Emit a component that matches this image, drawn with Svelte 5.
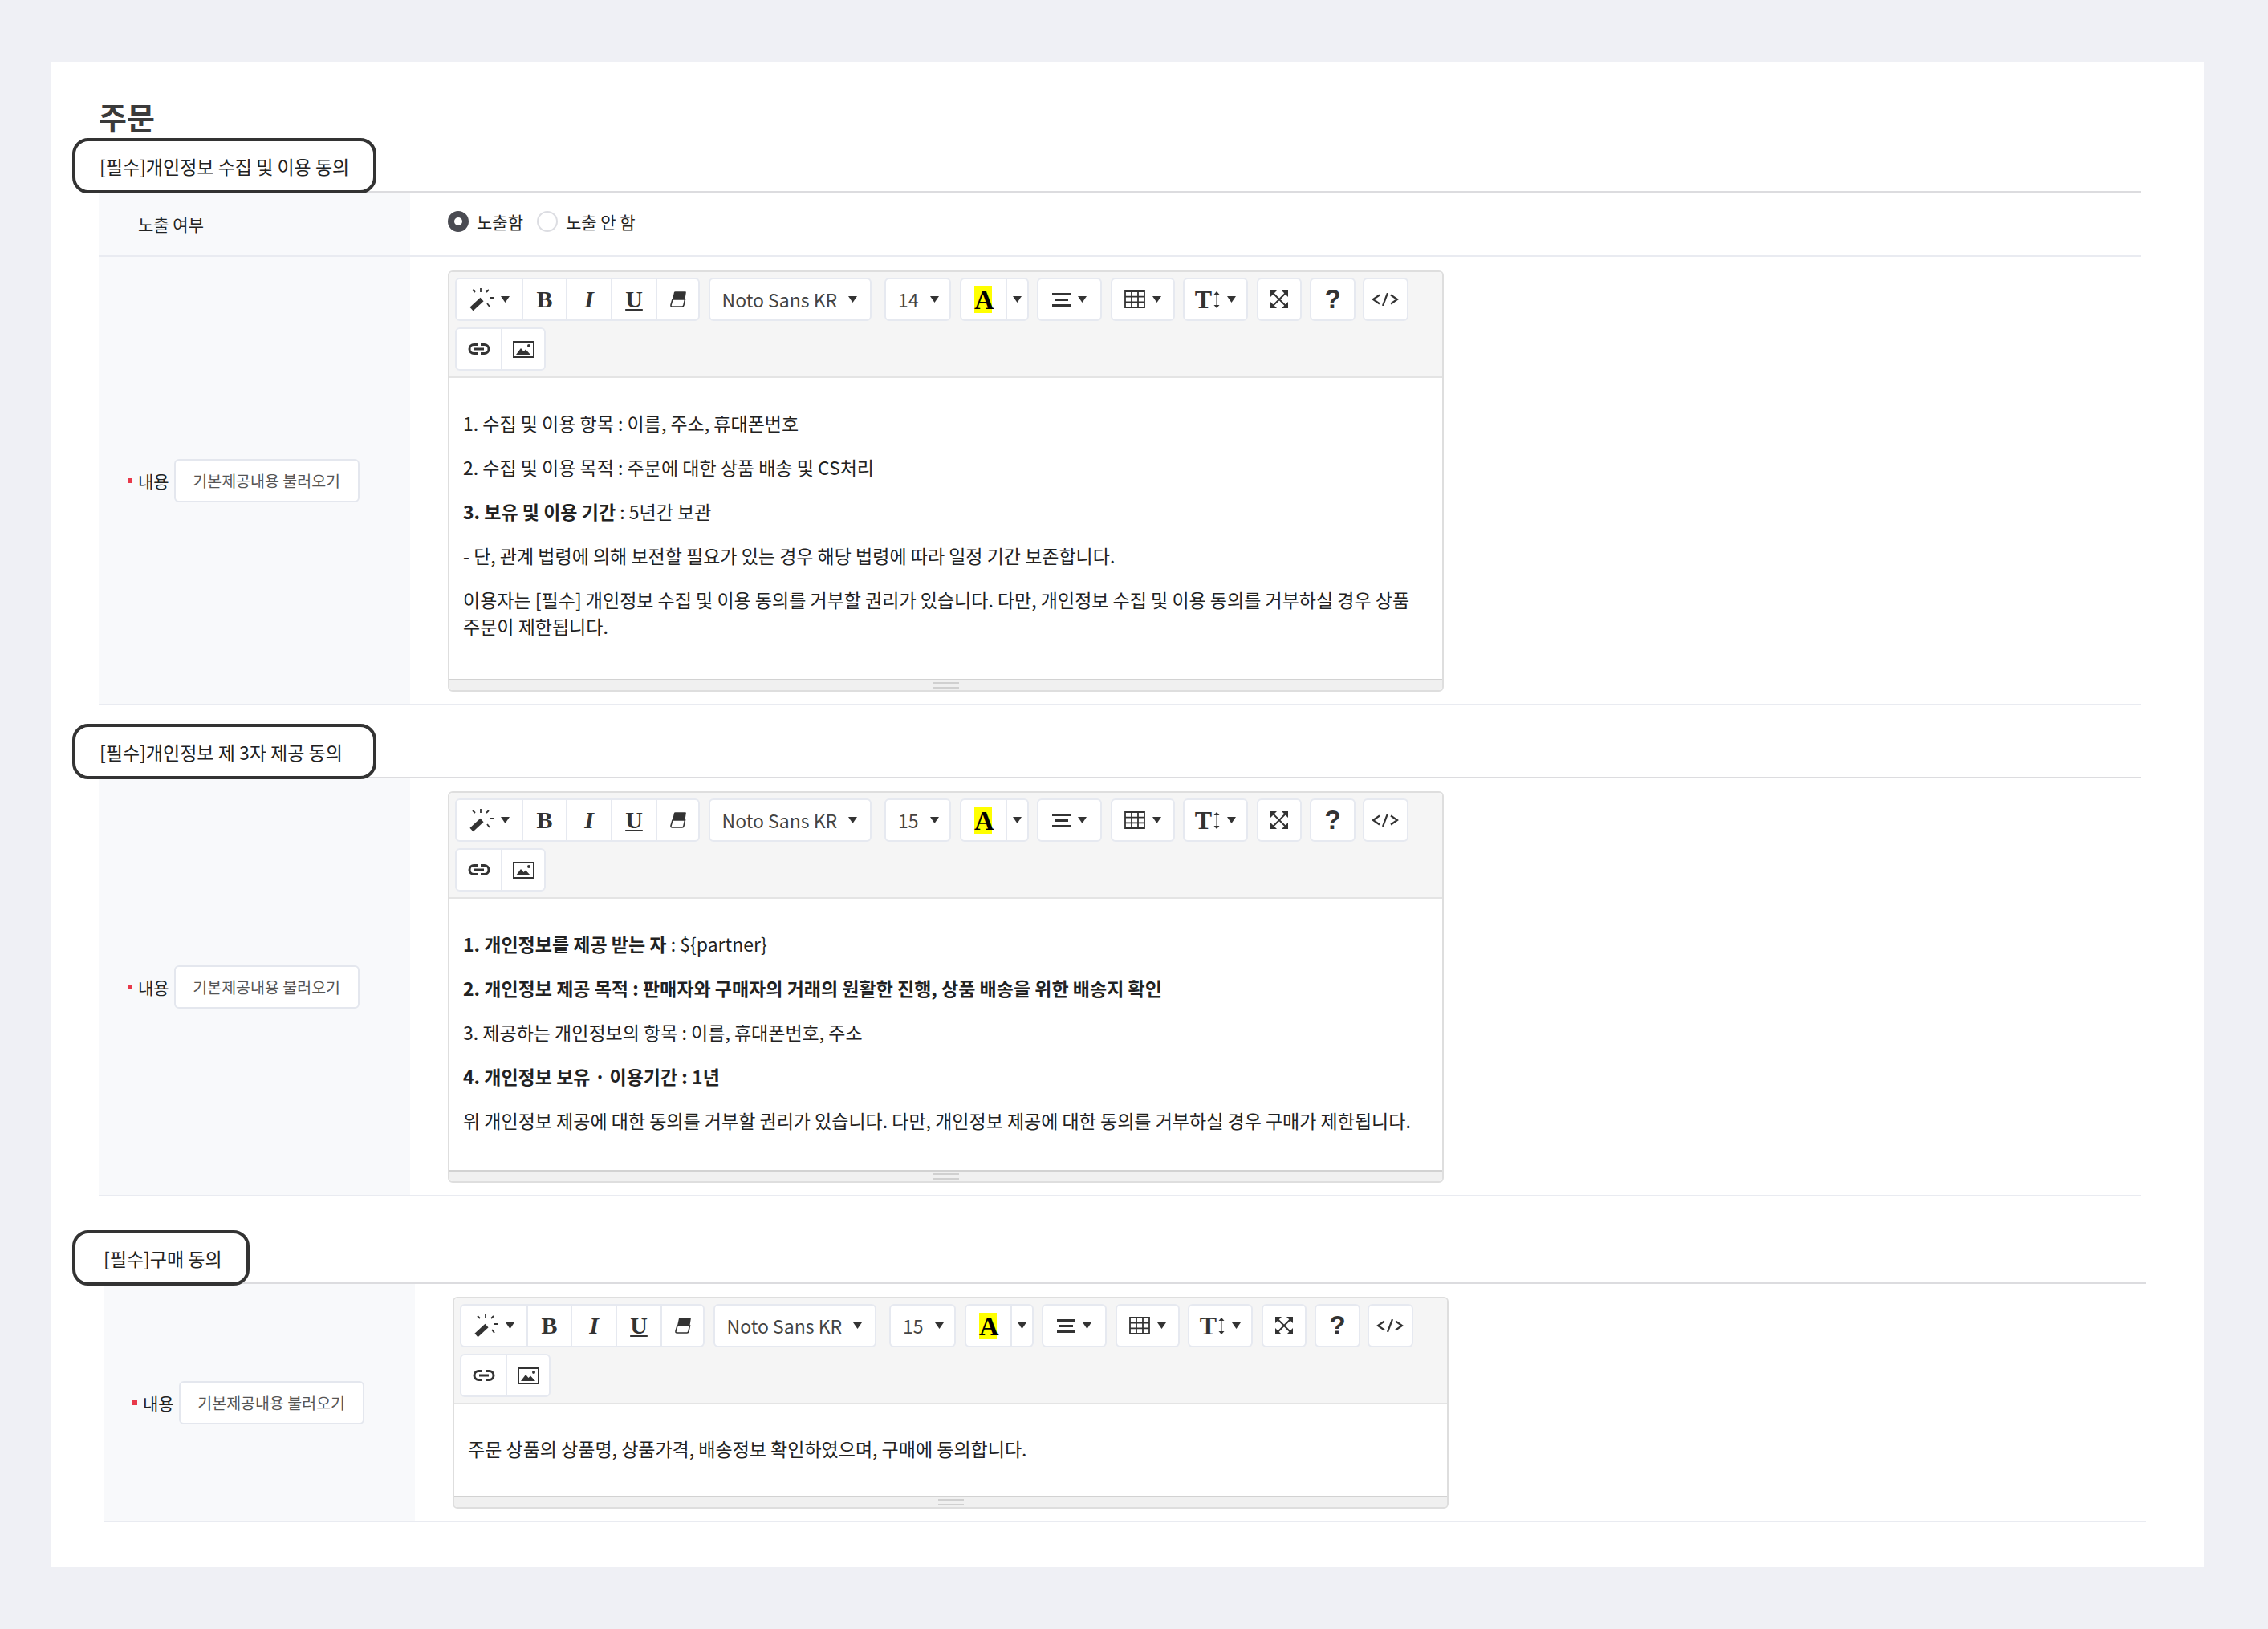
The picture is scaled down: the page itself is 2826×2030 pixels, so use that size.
<script>
    const sections = [
        {
            title: '[필수]개인정보 수집 및 이용 동의',
            exposure: true,
            size: 14,
            bodyClass: 'body1',
            paragraphs: [
                '1. 수집 및 이용 항목 : 이름, 주소, 휴대폰번호',
                '2. 수집 및 이용 목적 : 주문에 대한 상품 배송 및 CS처리',
                '<b>3. 보유 및 이용 기간</b> : 5년간 보관',
                '- 단, 관계 법령에 의해 보전할 필요가 있는 경우 해당 법령에 따라 일정 기간 보존합니다.',
                '이용자는 [필수] 개인정보 수집 및 이용 동의를 거부할 권리가 있습니다. 다만, 개인정보 수집 및 이용 동의를 거부하실 경우 상품 주문이 제한됩니다.'
            ]
        },
        {
            title: '[필수]개인정보 제 3자 제공 동의',
            size: 15,
            tight: true,
            bodyClass: 'body2',
            paragraphs: [
                '<b>1. 개인정보를 제공 받는 자</b> : ${partner}',
                '<b>2. 개인정보 제공 목적 : 판매자와 구매자의 거래의 원활한 진행, 상품 배송을 위한 배송지 확인</b>',
                '3. 제공하는 개인정보의 항목 : 이름, 휴대폰번호, 주소',
                '<b>4. 개인정보 보유 · 이용기간 : 1년</b>',
                '위 개인정보 제공에 대한 동의를 거부할 권리가 있습니다. 다만, 개인정보 제공에 대한 동의를 거부하실 경우 구매가 제한됩니다.'
            ]
        },
        {
            title: '[필수]구매 동의',
            size: 15,
            short: true,
            tight: true,
            bodyClass: 'body3',
            paragraphs: ['주문 상품의 상품명, 상품가격, 배송정보 확인하였으며, 구매에 동의합니다.']
        }
    ];
</script>

{#snippet caret()}
    <svg class="caret" width="11" height="8" viewBox="0 0 11 8"><path d="M0 0h11L5.500 8z" fill="#333" /></svg>
{/snippet}

{#snippet toolbar(size)}
    <div class="toolbar">
        <div class="group">
            <div class="btn w81">
                <svg width="30" height="30" viewBox="0 0 30 30" fill="none" stroke="#333">
                    <path d="M2.500 27 15.500 15" stroke-width="6" />
                    <path d="M14 1v5M24 3l-3 3M25 13h5M22 20l3 4M4 3l3 3" stroke-width="1.800" />
                </svg>
                {@render caret()}
            </div>
            <div class="btn w55 serif"><b>B</b></div>
            <div class="btn w56 serif"><b><i>I</i></b></div>
            <div class="btn w56 serif"><b class="under">U</b></div>
            <div class="btn w53">
                <svg width="20" height="20" viewBox="0 0 20 20">
                    <path d="M5 1q.3-.8 1.500-.8H19q1 0 .8 1.300L18.500 10H3z" fill="#333" />
                    <path d="M3 10H18.500l-1.500 7q-.4 2-2 2H2.500q-1.800 0-1.500-2z" fill="#fff" stroke="#333" stroke-width="1.600" />
                </svg>
            </div>
        </div>
        <div class="group font">
            <div class="btn w199 label"><span>Noto Sans KR</span>{@render caret()}</div>
        </div>
        <div class="group">
            <div class="btn w79 label"><span>{size}</span>{@render caret()}</div>
        </div>
        <div class="group">
            <div class="btn w55 serif"><b class="marker">A</b></div>
            <div class="btn w27">{@render caret()}</div>
        </div>
        <div class="group">
            <div class="btn w77">
                <svg width="23" height="17" viewBox="0 0 23 17" fill="#333"><path d="M0 0h23v3H0zM3 7h17v3H3zM0 14h23v3H0z" /></svg>
                {@render caret()}
            </div>
        </div>
        <div class="group">
            <div class="btn w76">
                <svg width="26" height="22" viewBox="0 0 26 22" fill="none" stroke="#333" stroke-width="1.800"><path d="M1 1h24v20H1zM9 1v20M17 1v20M1 7.700h24M1 14.300h24" /></svg>
                {@render caret()}
            </div>
        </div>
        <div class="group">
            <div class="btn w77 serif">
                <b class="bigT">T</b>
                <svg width="8" height="21" viewBox="0 0 8 21" fill="#333"><path d="M4 0l3.500 4h-3v13h3L4 21 .500 17h3V4h-3z" /></svg>
                {@render caret()}
            </div>
        </div>
        <div class="group">
            <div class="btn w52">
                <svg width="22" height="22" viewBox="0 0 22 22" fill="#333">
                    <path d="M3 3 19 19M19 3 3 19" stroke="#333" stroke-width="2" />
                    <path d="M0 0h8L0 8zM22 0v8L14 0zM0 22v-8l8 8zM22 22h-8l8-8z" />
                </svg>
            </div>
        </div>
        <div class="group">
            <div class="btn w53 help"><b>?</b></div>
        </div>
        <div class="group last">
            <div class="btn w53">
                <svg width="34" height="16" viewBox="0 0 34 16" fill="none" stroke="#333" stroke-width="2.200"><path d="M10 2.500 2 8l8 5.500M24 2.500 32 8l-8 5.500M20 0l-6 16" /></svg>
            </div>
        </div>
        <div class="break"></div>
        <div class="group">
            <div class="btn w55">
                <svg width="28" height="14" viewBox="0 0 28 14" fill="none" stroke="#333" stroke-width="3"><path d="M12 1.500H7.500a5.500 5.500 0 0 0 0 11H12M16 1.500h4.500a5.500 5.500 0 0 1 0 11H16M8 7h12" /></svg>
            </div>
            <div class="btn w54">
                <svg width="27" height="21" viewBox="0 0 27 21"><path d="M1 1h25v19H1z" fill="#fff" stroke="#333" stroke-width="2" /><path d="M4 17l6-8 3.500 4 2.500-2.500 6 6.500z" fill="#333" /><circle cx="20" cy="6" r="2" fill="#333" /></svg>
            </div>
        </div>
    </div>
{/snippet}

<div class="page">
    <div class="card">
        <h2 class="pageTitle">주문</h2>
        {#each sections as section}
            <section class="section" class:short={section.short}>
                <div class="sectionHead">
                    <div class="pill">{section.title}</div>
                </div>
                {#if section.exposure}
                    <div class="row rowSmall">
                        <div class="th plain">노출 여부</div>
                        <div class="td radios">
                            <span class="radio on"></span><span class="radioLabel">노출함</span>
                            <span class="radio"></span><span class="radioLabel">노출 안 함</span>
                        </div>
                    </div>
                {/if}
                <div class="row">
                    <div class="th">
                        <span class="dot"></span>
                        <span class="thText">내용</span>
                        <div class="loadBtn">기본제공내용 불러오기</div>
                    </div>
                    <div class="td" class:tight={section.tight}>
                        <div class="editor">
                            {@render toolbar(section.size)}
                            <div class="editable {section.bodyClass}">
                                {#each section.paragraphs as p}
                                    <p>{@html p}</p>
                                {/each}
                            </div>
                            <div class="statusbar"><span class="grip"></span></div>
                        </div>
                    </div>
                </div>
            </section>
        {/each}
    </div>
</div>

<style>
    :global(body) {
        margin: 0;
        background: #eff0f5;
    }

    .page {
        padding: 77px 80px 77px 63px;
        font-family: "Noto Sans CJK KR", "Noto Sans", sans-serif;
        color: #222;
    }

    .card {
        background: #fff;
        padding: 44px 78px 56px 60px;
    }

    .pageTitle {
        margin: 0 0 4px;
        font-size: 38px;
        line-height: 47px;
        font-weight: 700;
        color: #3a3a3a;
    }

    .section {
        margin-top: 23px;
    }

    .section:nth-of-type(1) {
        margin-top: 0;
    }

    .section.short {
        margin: 42px -6px 0 6px;
    }

    .sectionHead {
        border-bottom: 2px solid #dcdcdf;
        height: 66px;
    }

    .short .sectionHead {
        height: 65px;
    }

    .pill {
        position: relative;
        box-sizing: border-box;
        width: 379px;
        height: 69px;
        margin-left: -33px;
        padding-left: 30px;
        display: flex;
        align-items: center;
        background: #fff;
        border: 4px solid #333;
        border-radius: 20px;
        font-size: 23px;
        color: #222;
    }

    .short .pill {
        width: 221px;
        margin-left: -39px;
        padding-left: 35px;
    }

    .row {
        display: grid;
        grid-template-columns: 388px 1fr;
        border-bottom: 2px solid #e9ebf1;
    }

    .rowSmall {
        height: 78px;
    }

    .th {
        background: #f8f9fb;
        display: flex;
        align-items: center;
        padding-left: 36px;
        font-size: 21px;
    }

    .th.plain {
        padding-left: 49px;
    }

    .dot {
        width: 6px;
        height: 6px;
        background: #e8394a;
        margin-right: 7px;
    }

    .thText {
        margin-right: 6px;
    }

    .loadBtn {
        box-sizing: border-box;
        width: 231px;
        height: 54px;
        display: flex;
        align-items: center;
        justify-content: center;
        background: #fff;
        border: 2px solid #e4e7ee;
        border-radius: 6px;
        font-size: 19.500px;
        color: #555;
    }

    .td {
        padding: 17px 0 15px 47px;
    }

    .td.tight {
        padding: 16px 0 15px 47px;
    }

    .radios {
        display: flex;
        align-items: center;
        padding-top: 0;
        padding-bottom: 6px;
        font-size: 21px;
    }

    .radio {
        box-sizing: border-box;
        width: 26px;
        height: 26px;
        border-radius: 50%;
        border: 2px solid #dcdde2;
        background: #fff;
        margin-right: 10px;
    }

    .radio.on {
        border: 8px solid #4a4b52;
    }

    .radioLabel {
        margin-right: 17px;
    }

    .editor {
        box-sizing: border-box;
        width: 1241px;
        border: 2px solid #dedede;
        border-radius: 6px;
    }

    .toolbar {
        box-sizing: border-box;
        height: 132px;
        display: flex;
        flex-wrap: wrap;
        align-content: flex-start;
        column-gap: 10.500px;
        padding: 7px 7px 0;
        background: #f5f5f5;
        border-bottom: 2px solid #e4e4e4;
        border-radius: 4px 4px 0 0;
    }

    .break {
        flex-basis: 100%;
        height: 0;
    }

    .group {
        display: flex;
        height: 54px;
        margin-bottom: 8px;
        box-sizing: border-box;
        background: #fff;
        border: 2px solid #e6e9f0;
        border-radius: 6px;
    }

    .group.font {
        margin-right: 6px;
    }

    .group.last {
        margin-left: -2px;
    }

    .btn {
        box-sizing: border-box;
        display: flex;
        align-items: center;
        justify-content: center;
        gap: 9px;
        height: 100%;
        border-left: 2px solid #e6e9f0;
        color: #333;
    }

    .btn:first-child {
        border-left: 0;
    }

    .w27 { width: 27px; }
    .w52 { width: 52px; }
    .w53 { width: 53px; }
    .w54 { width: 54px; }
    .w55 { width: 55px; }
    .w56 { width: 56px; }
    .w76 { width: 76px; }
    .w77 { width: 77px; }
    .w79 { width: 79px; }
    .w81 { width: 81px; }
    .w199 { width: 199px; }

    .label {
        font-size: 23px;
        color: #444;
        justify-content: flex-start;
        padding-left: 15px;
        gap: 14px;
    }

    .serif {
        font-family: "Liberation Serif", serif;
        font-size: 30px;
        color: #333;
    }

    .under {
        text-decoration: underline;
        text-underline-offset: 2px;
        text-decoration-thickness: 2px;
    }

    .marker {
        background: #ff0;
        color: #000;
        width: 22px;
        height: 33px;
        line-height: 34px;
        text-align: center;
        font-size: 34px;
    }

    .bigT {
        font-size: 32px;
        margin-right: -7px;
    }

    .help {
        font-family: "Liberation Sans", sans-serif;
        font-size: 33px;
    }

    .editable {
        box-sizing: border-box;
        padding: 40px 17px 0 17px;
        background: #fff;
        font-size: 23px;
        line-height: 33px;
        color: #222;
    }

    .editable p {
        margin: 0 0 22px;
    }

    .body1 { height: 375px; }
    .body2 { height: 338px; }
    .body3 { height: 114px; padding-top: 39px; }

    .statusbar {
        box-sizing: border-box;
        height: 14px;
        display: flex;
        justify-content: center;
        background: #f0f0f0;
        border-top: 2px solid #d2d2d2;
        border-radius: 0 0 4px 4px;
    }

    .grip {
        width: 32px;
        height: 8px;
        margin-top: 2px;
        border-top: 2px solid #d0d0d0;
        border-bottom: 2px solid #d0d0d0;
        box-sizing: border-box;
    }
</style>
